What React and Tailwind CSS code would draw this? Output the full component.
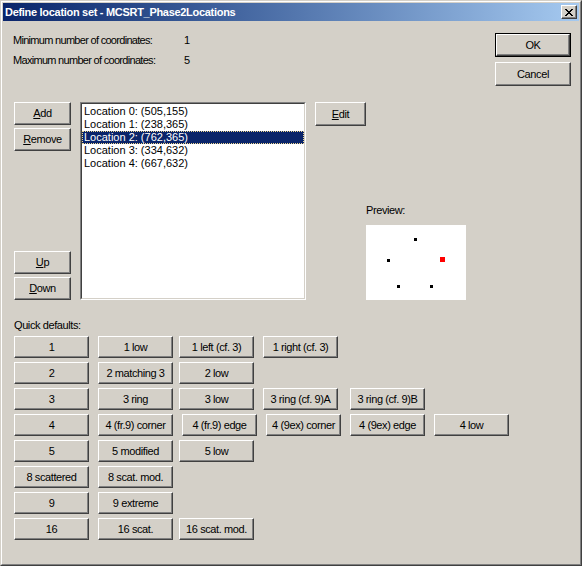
import React from 'react';

// Classic Windows 2000 style dialog: "Define location set"
const face = 'bg-[#d4d0c8]';

const Btn = ({ children, className = '', isDefault = false }) => {
    const bevel = 'border-t border-l border-t-white border-l-white border-r border-b border-r-[#404040] border-b-[#404040] shadow-[inset_-1px_-1px_0_#808080]';
    if (isDefault) {
        return (
            <div className={`border border-black ${className}`}>
                <div className={`w-full h-full flex items-center justify-center ${face} ${bevel}`}>{children}</div>
            </div>
        );
    }
    return (
        <div className={`flex items-center justify-center ${face} ${bevel} ${className}`}>{children}</div>
    );
};

const U = ({ children }) => <span className="underline underline-offset-[1px]">{children}</span>;

const locations = [
    'Location 0: (505,155)',
    'Location 1: (238,365)',
    'Location 2: (762,365)',
    'Location 3: (334,632)',
    'Location 4: (667,632)',
];

const Q = 'h-[22px] w-[75px] shrink-0';

export default function App() {
    return (
        <div className="w-[582px] h-[566px] font-['Liberation_Sans',Arial,sans-serif] text-[11px] leading-[13px] text-black tracking-[-0.4px] select-none">
            {/* window frame */}
            <div className="w-full h-full border-t border-l border-t-[#d4d0c8] border-l-[#d4d0c8] border-r border-b border-r-[#404040] border-b-[#404040]">
                <div className={`w-full h-full border-t border-l border-t-white border-l-white border-r border-b border-r-[#808080] border-b-[#808080] p-px ${face} flex flex-col`}>
                    {/* title bar */}
                    <div className="h-[18px] shrink-0 flex items-center justify-between pl-[2px] pr-[2px] bg-gradient-to-r from-[#0a246a] to-[#a6caf0]">
                        <span className="text-white font-bold tracking-[-0.3px]">Define location set - MCSRT_Phase2Locations</span>
                        <Btn className="w-[16px] h-[14px]">
                            <svg width="8" height="7" viewBox="0 0 8 7" shapeRendering="crispEdges">
                                <path d="M0 0h2v1H0zM6 0h2v1H6zM1 1h2v1H1zM5 1h2v1H5zM2 2h4v1H2zM3 3h2v1H3zM2 4h4v1H2zM1 5h2v1H1zM5 5h2v1H5zM0 6h2v1H0zM6 6h2v1H6z" fill="#000" />
                            </svg>
                        </Btn>
                    </div>

                    {/* client area */}
                    <div className="flex-1 flex flex-col">
                        {/* header */}
                        <div className="h-[81px] shrink-0 flex justify-between">
                            <div className="pl-[10px] pt-[13px] flex flex-col gap-[7px]">
                                <div className="flex"><span className="w-[171px] tracking-[-0.7px]">Minimum number of coordinates:</span><span>1</span></div>
                                <div className="flex"><span className="w-[171px] tracking-[-0.7px]">Maximum number of coordinates:</span><span>5</span></div>
                            </div>
                            <div className="pr-[8px] pt-[12px] flex flex-col gap-[5px]">
                                <Btn isDefault className="w-[76px] h-[24px]">OK</Btn>
                                <Btn className="w-[76px] h-[24px]">Cancel</Btn>
                            </div>
                        </div>

                        {/* list section */}
                        <div className="flex h-[199px] shrink-0">
                            <div className="ml-[11px] w-[57px] flex flex-col h-[198px]">
                                <Btn className="h-[23px]"><U>A</U>dd</Btn>
                                <Btn className="h-[23px] mt-[3px]"><U>R</U>emove</Btn>
                                <div className="flex-1" />
                                <Btn className="h-[23px]"><U>U</U>p</Btn>
                                <Btn className="h-[23px] mt-[3px]"><U>D</U>own</Btn>
                            </div>
                            <div className="ml-[9px] w-[226px] h-[198px] border-t border-l border-t-[#808080] border-l-[#808080] border-r border-b border-r-white border-b-white">
                                <div className="w-full h-full bg-white border-t border-l border-t-[#404040] border-l-[#404040] border-r border-b border-r-[#d4d0c8] border-b-[#d4d0c8] pt-px tracking-normal">
                                    {locations.map((loc, i) => (
                                        <div
                                            key={loc}
                                            className={`h-[13px] pl-[2px] whitespace-nowrap ${i === 2 ? 'bg-[#0a246a] text-white outline-1 outline-dotted outline-[#f0d890] -outline-offset-1' : ''}`}
                                        >
                                            {loc}
                                        </div>
                                    ))}
                                </div>
                            </div>
                            <div className="ml-[9px] flex flex-col">
                                <Btn className="w-[51px] h-[24px]"><U>E</U>dit</Btn>
                                <div className="ml-[51px] mt-[78px]">Preview:</div>
                                <div className="ml-[51px] mt-[8px] w-[100px] h-[75px] bg-white relative">
                                    <div className="absolute left-[48px] top-[13px] w-[3px] h-[3px] bg-black" />
                                    <div className="absolute left-[21px] top-[34px] w-[3px] h-[3px] bg-black" />
                                    <div className="absolute left-[74px] top-[32px] w-[5px] h-[5px] bg-[#ff0000]" />
                                    <div className="absolute left-[31px] top-[60px] w-[3px] h-[3px] bg-black" />
                                    <div className="absolute left-[64px] top-[60px] w-[3px] h-[3px] bg-black" />
                                </div>
                            </div>
                        </div>

                        {/* quick defaults */}
                        <div className="ml-[11px] mt-[18px]">Quick defaults:</div>
                        <div className="ml-[11px] mt-[4px] flex flex-col gap-[4px]">
                            <div className="flex">
                                <Btn className={Q}>1</Btn>
                                <Btn className={`${Q} ml-[9px]`}>1 low</Btn>
                                <Btn className={`${Q} ml-[6px]`}>1 left (cf. 3)</Btn>
                                <Btn className={`${Q} ml-[9px]`}>1 right (cf. 3)</Btn>
                            </div>
                            <div className="flex">
                                <Btn className={Q}>2</Btn>
                                <Btn className={`${Q} ml-[9px]`}>2 matching 3</Btn>
                                <Btn className={`${Q} ml-[6px]`}>2 low</Btn>
                            </div>
                            <div className="flex">
                                <Btn className={Q}>3</Btn>
                                <Btn className={`${Q} ml-[9px]`}>3 ring</Btn>
                                <Btn className={`${Q} ml-[6px]`}>3 low</Btn>
                                <Btn className={`${Q} ml-[9px]`}>3 ring (cf. 9)A</Btn>
                                <Btn className={`${Q} ml-[12px]`}>3 ring (cf. 9)B</Btn>
                            </div>
                            <div className="flex">
                                <Btn className={Q}>4</Btn>
                                <Btn className={`${Q} ml-[9px]`}>4 (fr.9) corner</Btn>
                                <Btn className={`${Q} ml-[9px]`}>4 (fr.9) edge</Btn>
                                <Btn className={`${Q} ml-[9px]`}>4 (9ex) corner</Btn>
                                <Btn className={`${Q} ml-[9px]`}>4 (9ex) edge</Btn>
                                <Btn className={`${Q} ml-[9px]`}>4 low</Btn>
                            </div>
                            <div className="flex">
                                <Btn className={Q}>5</Btn>
                                <Btn className={`${Q} ml-[9px]`}>5 modified</Btn>
                                <Btn className={`${Q} ml-[6px]`}>5 low</Btn>
                            </div>
                            <div className="flex">
                                <Btn className={Q}>8 scattered</Btn>
                                <Btn className={`${Q} ml-[9px]`}>8 scat. mod.</Btn>
                            </div>
                            <div className="flex">
                                <Btn className={Q}>9</Btn>
                                <Btn className={`${Q} ml-[9px]`}>9 extreme</Btn>
                            </div>
                            <div className="flex">
                                <Btn className={Q}>16</Btn>
                                <Btn className={`${Q} ml-[9px]`}>16 scat.</Btn>
                                <Btn className={`${Q} ml-[6px]`}>16 scat. mod.</Btn>
                            </div>
                        </div>
                    </div>
                </div>
            </div>
        </div>
    );
}
